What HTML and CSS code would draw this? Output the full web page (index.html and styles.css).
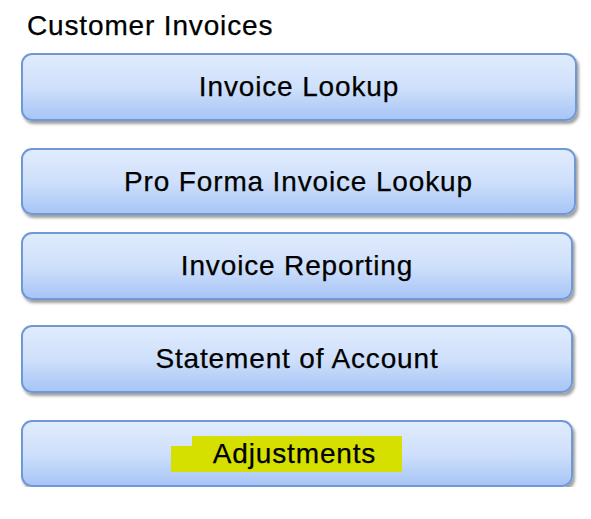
FILE: index.html
```html
<!DOCTYPE html>
<html>
<head>
<meta charset="utf-8">
<link rel="stylesheet" href="styles.css">
</head>
<body>
<div class="page">
  <div class="title">Customer Invoices</div>
  <div class="btn b1">Invoice Lookup</div>
  <div class="btn b2">Pro Forma Invoice Lookup</div>
  <div class="btn b3">Invoice Reporting</div>
  <div class="btn b4">Statement of Account</div>
  <div class="btn b5"><span class="hl">Adjustments</span></div>
</div>
</body>
</html>
```

FILE: styles.css
```css
html, body {
  margin: 0;
  padding: 0;
  background: #ffffff;
}
.page {
  display: flex;
  flex-direction: column;
  align-items: flex-start;
  padding-top: 10px;
  font-family: "Liberation Sans", Arial, sans-serif;
  color: #000;
  -webkit-text-stroke: 0.25px #000;
}
.title {
  font-size: 28px;
  line-height: 32px;
  height: 32px;
  margin-left: 27px;
  letter-spacing: 0.85px;
}
.btn {
  box-sizing: border-box;
  margin-left: 21px;
  display: flex;
  align-items: center;
  justify-content: center;
  border: 2px solid #7099d4;
  border-radius: 11px;
  background: linear-gradient(to bottom, #e0ebfd 0%, #cfe0fb 50%, #a7c5f6 100%);
  box-shadow: 2px 3px 3px rgba(0, 0, 0, 0.38);
  font-size: 28px;
  letter-spacing: 0.85px;
}
.b1 { margin-top: 11px; width: 556px; height: 68px; }
.b2 { margin-top: 27px; width: 555px; height: 67px; }
.b3 { margin-top: 17px; width: 552px; height: 68px; }
.b4 { margin-top: 25px; width: 552px; height: 68px; }
.b5 { margin-top: 27px; width: 552px; height: 67px; }
.hl {
  position: relative;
  display: inline-block;
  background: #d5e000;
  padding: 1px 26px 2px 21px;
  line-height: 33px;
}
.hl::before {
  content: "";
  position: absolute;
  left: -21px;
  top: 10px;
  bottom: 0;
  width: 21px;
  background: #d5e000;
}
```
